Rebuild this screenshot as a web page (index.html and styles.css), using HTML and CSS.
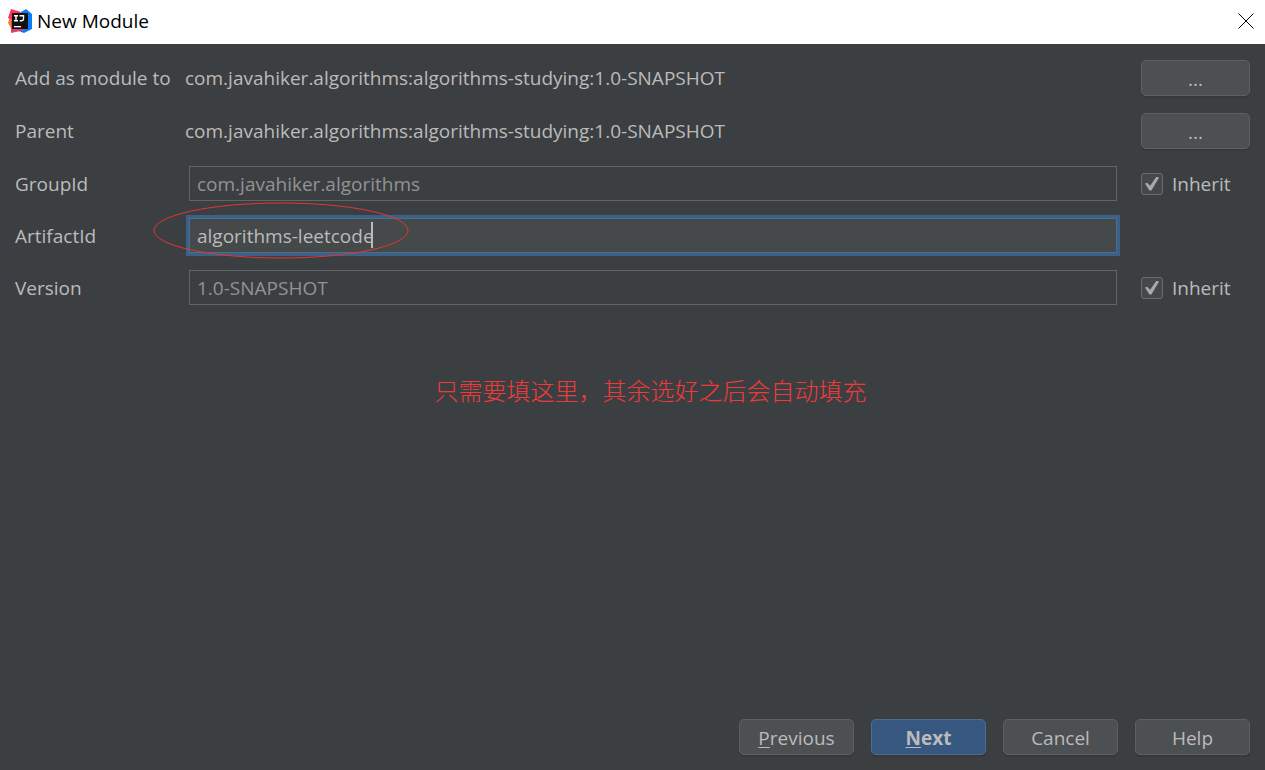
FILE: index.html
```html
<!DOCTYPE html>
<html lang="en">
<head>
<meta charset="utf-8">
<meta name="viewport" content="width=device-width, initial-scale=1">
<title>New Module</title>
<link rel="stylesheet" href="styles.css">
</head>
<body>
<div class="window">
  <header class="titlebar">
    <svg class="logo" viewBox="0 0 24 24" aria-hidden="true">
      <path fill="#fc801d" d="M2 8 0 14l3 5 5-7z"/>
      <path fill="#fe315d" d="M3 0 13 3 8 12 4 11 0 9z"/>
      <path fill="#087cfa" d="M13 3 18 0l6 5v15l-8 4-8-3z"/>
      <path fill="#e13f67" d="M3 12h9l5 9-14 3z"/>
      <path fill="#111" d="M4 4h16v16H4z"/>
      <path fill="none" stroke="#fff" stroke-width="1.4" d="M6 6.700h4M8 6.700v5M6 11.700h4M11.500 6.700h4v3.300q0 1.700-1.700 1.700h-2"/>
      <path fill="#fff" d="M6 17h7v1.300H6z"/>
    </svg>
    <h1 class="title">New Module</h1>
    <button class="close" type="button" aria-label="Close">
      <svg viewBox="0 0 16 16" aria-hidden="true"><path d="M.5.5l15 15M15.500.5l-15 15"/></svg>
    </button>
  </header>
  <form class="content">
    <div class="form-grid">
      <span>Add as module to</span>
      <output class="value">com.javahiker.algorithms:algorithms-studying:1.0-SNAPSHOT</output>
      <button class="btn browse" type="button" aria-label="Choose module">...</button>

      <span>Parent</span>
      <output class="value">com.javahiker.algorithms:algorithms-studying:1.0-SNAPSHOT</output>
      <button class="btn browse" type="button" aria-label="Choose parent">...</button>

      <label for="group">GroupId</label>
      <div class="field"><input class="text inherited" id="group" type="text" value="com.javahiker.algorithms" readonly></div>
      <label class="inherit"><input type="checkbox" checked>Inherit</label>

      <label for="artifact">ArtifactId</label>
      <div class="field">
        <input class="text active" id="artifact" type="text" value="algorithms-leetcode">
        <span class="caret"></span>
        <svg class="ring" viewBox="0 0 256 57" aria-hidden="true"><ellipse cx="128" cy="28.500" rx="127" ry="27.500"/></svg>
      </div>
      <span></span>

      <label for="version">Version</label>
      <div class="field"><input class="text inherited" id="version" type="text" value="1.0-SNAPSHOT" readonly></div>
      <label class="inherit"><input type="checkbox" checked>Inherit</label>
    </div>
    <p class="note" lang="zh-CN">只需要填这里，其余选好之后会自动填充</p>
    <footer class="actions">
      <button class="btn" type="button"><span><u>P</u>revious</span></button>
      <button class="btn primary" type="submit"><span><u>N</u>ext</span></button>
      <button class="btn" type="button">Cancel</button>
      <button class="btn" type="button">Help</button>
    </footer>
  </form>
</div>
</body>
</html>
```
FILE: styles.css
```css
* { box-sizing: border-box; }

body {
  margin: 0;
  background: #3c3f41;
  color: #bbb;
  font: 19px/24px "Open Sans", "Noto Sans CJK SC", sans-serif;
}

button, input { font: inherit; color: inherit; }

.window {
  display: flex;
  flex-direction: column;
  min-height: 100vh;
}

.titlebar {
  display: flex;
  align-items: center;
  height: 44px;
  padding: 0 11px 2px 8px;
  background: #fff;
  color: #000;
}

.logo { width: 24px; height: 24px; margin-right: 5px; }

.title {
  flex: 1;
  margin: 0;
  font-size: 19px;
  font-weight: 400;
}

.close {
  display: flex;
  padding: 0;
  border: 0;
  background: none;
}

.close svg {
  width: 16px;
  height: 16px;
  fill: none;
  stroke: #000;
}

.content {
  flex: 1;
  display: flex;
  flex-direction: column;
  padding: 16px 15px 15px;
}

.form-grid {
  display: grid;
  grid-template-columns: 154px 1fr 109px;
  column-gap: 16px;
  row-gap: 17px;
  align-items: center;
  white-space: nowrap;
}

.btn {
  display: flex;
  align-items: center;
  justify-content: center;
  width: 115px;
  height: 36px;
  padding: 2px 0 0;
  border: 1px solid #5e6060;
  border-radius: 5px;
  background: #4c5052;
  box-shadow: 0 2px 1px #36383a;
}

.browse { width: 109px; }

.primary {
  border-color: #4c708c;
  background: #365880;
  font-weight: 700;
}

.btn u {
  text-decoration-thickness: 1px;
  text-underline-offset: 2px;
}

.field {
  position: relative;
  display: flex;
  padding: 0 8px 0 4px;
}

.text {
  flex: 1;
  min-width: 0;
  height: 35px;
  padding: 0 7px;
  border: 1px solid #646464;
  border-radius: 0;
  outline: 0;
  background: #45494a;
}

.inherited {
  background: #3c3f41;
  color: #939393;
}

.active {
  border-color: #466d94;
  box-shadow: 0 0 0 3px #3d6185;
}

.caret {
  position: absolute;
  top: 4px;
  left: 186px;
  width: 2px;
  height: 26px;
  background: #bbb;
}

.ring {
  position: absolute;
  top: -16px;
  left: -32px;
  width: 256px;
  height: 57px;
  fill: none;
  stroke: #e33535;
  pointer-events: none;
}

.inherit {
  display: flex;
  align-items: center;
  gap: 9px;
}

.inherit input {
  appearance: none;
  width: 22px;
  height: 22px;
  margin: 0;
  border: 1px solid #6b6b6b;
  border-radius: 3px;
  background: #43494a;
  display: grid;
  place-items: center;
}

.inherit input:checked::before {
  content: "";
  width: 14px;
  height: 14px;
  background: #a9a9a9;
  clip-path: polygon(0 50%, 15% 44%, 37% 66%, 82% 0, 100% 8%, 46% 100%, 32% 100%);
}

.note {
  margin: 73px 0 0;
  color: #f03a3a;
  font: 24px/24px "Noto Sans CJK SC", sans-serif;
  font-weight: 300;
  text-align: center;
  padding-left: 36px;
}

.actions {
  display: flex;
  flex-wrap: wrap;
  justify-content: flex-end;
  gap: 17px;
  margin-top: auto;
}
```
